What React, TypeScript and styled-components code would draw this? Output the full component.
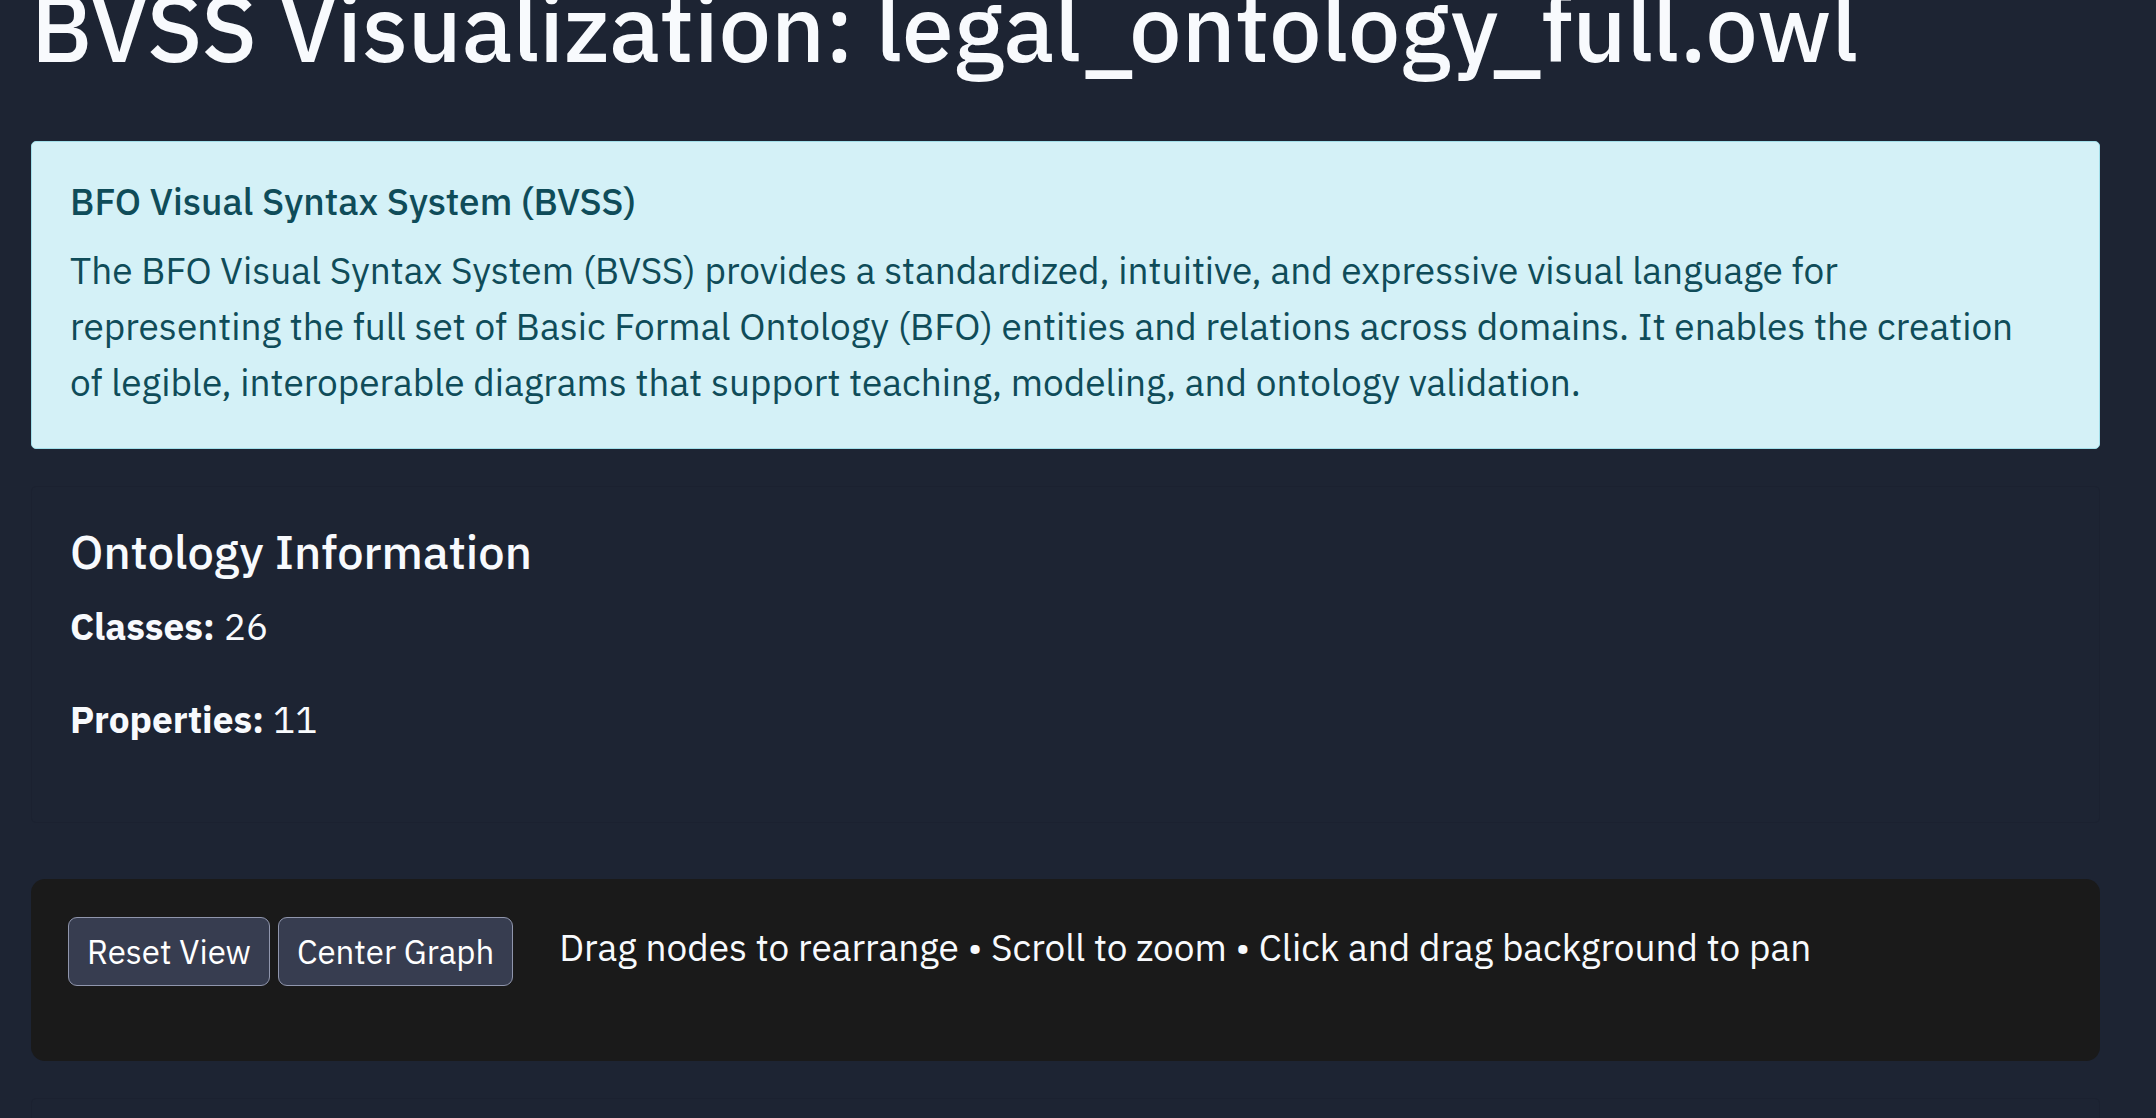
import styled, { createGlobalStyle } from "styled-components";

const Global = createGlobalStyle`
  *, *::before, *::after { box-sizing: border-box; }
  body {
    margin: 0;
    overflow-x: hidden;
    background: #1d2433;
    color: #f8fafd;
    font-family: "IBM Plex Sans", "Open Sans", "Noto Sans", sans-serif;
    font-size: 37px;
    line-height: 56px;
  }
  h1, h2, h3, p { margin: 0; }
`;

const Page = styled.main`
  display: flow-root;
  padding: 0 56px 0 31px;
`;

const Title = styled.h1`
  margin-top: -28px;
  font-size: 93px;
  line-height: 112px;
  font-weight: 500;
`;

const Notice = styled.section`
  margin-top: 57px;
  padding: 37px 56px 38px 38px;
  border: 1px solid #a2dfea;
  border-radius: 5px;
  background: #d4f1f7;
  color: #0f4c59;
`;

const NoticeTitle = styled.h2`
  margin-bottom: 18px;
  font-size: 37px;
  line-height: 45px;
  font-weight: 500;
`;

const Panel = styled.section`
  margin-top: 37px;
  padding: 37px 38px 38px;
  border: 1px solid #1b2130;
  border-radius: 5px;
`;

const Graph = styled(Panel)`
  min-height: 560px;
`;

const InfoTitle = styled.h2`
  margin-bottom: 18px;
  font-size: 47px;
  line-height: 56px;
  font-weight: 500;
`;

const Stat = styled.p`
  margin-bottom: 37px;
`;

const Controls = styled.section`
  display: flex;
  align-items: flex-start;
  gap: 8px;
  margin-top: 56px;
  padding: 38px 37px 75px;
  border-radius: 14px;
  background: #1a1a1a;
`;

const Button = styled.button`
  height: 69px;
  padding: 0 18px;
  border: 1px solid #9096ad;
  border-radius: 9px;
  background: #373d50;
  color: #ffffff;
  font: inherit;
  font-size: 33px;
  white-space: nowrap;
`;

const Hint = styled.p`
  margin-left: 38px;
  line-height: 60px;
`;

export default function App() {
  return (
    <>
      <Global />
      <Page>
        <Title>BVSS Visualization: legal_ontology_full.owl</Title>
        <Notice>
          <NoticeTitle>BFO Visual Syntax System (BVSS)</NoticeTitle>
          <p>
            The BFO Visual Syntax System (BVSS) provides a standardized, intuitive, and expressive visual language for
            representing the full set of Basic Formal Ontology (BFO) entities and relations across domains. It enables
            the creation of legible, interoperable diagrams that support teaching, modeling, and ontology validation.
          </p>
        </Notice>
        <Panel>
          <InfoTitle>Ontology Information</InfoTitle>
          <Stat><strong>Classes:</strong> 26</Stat>
          <Stat><strong>Properties:</strong> 11</Stat>
        </Panel>
        <Controls>
          <Button type="button">Reset View</Button>
          <Button type="button">Center Graph</Button>
          <Hint>Drag nodes to rearrange • Scroll to zoom • Click and drag background to pan</Hint>
        </Controls>
        <Graph aria-label="Graph" />
      </Page>
    </>
  );
}
